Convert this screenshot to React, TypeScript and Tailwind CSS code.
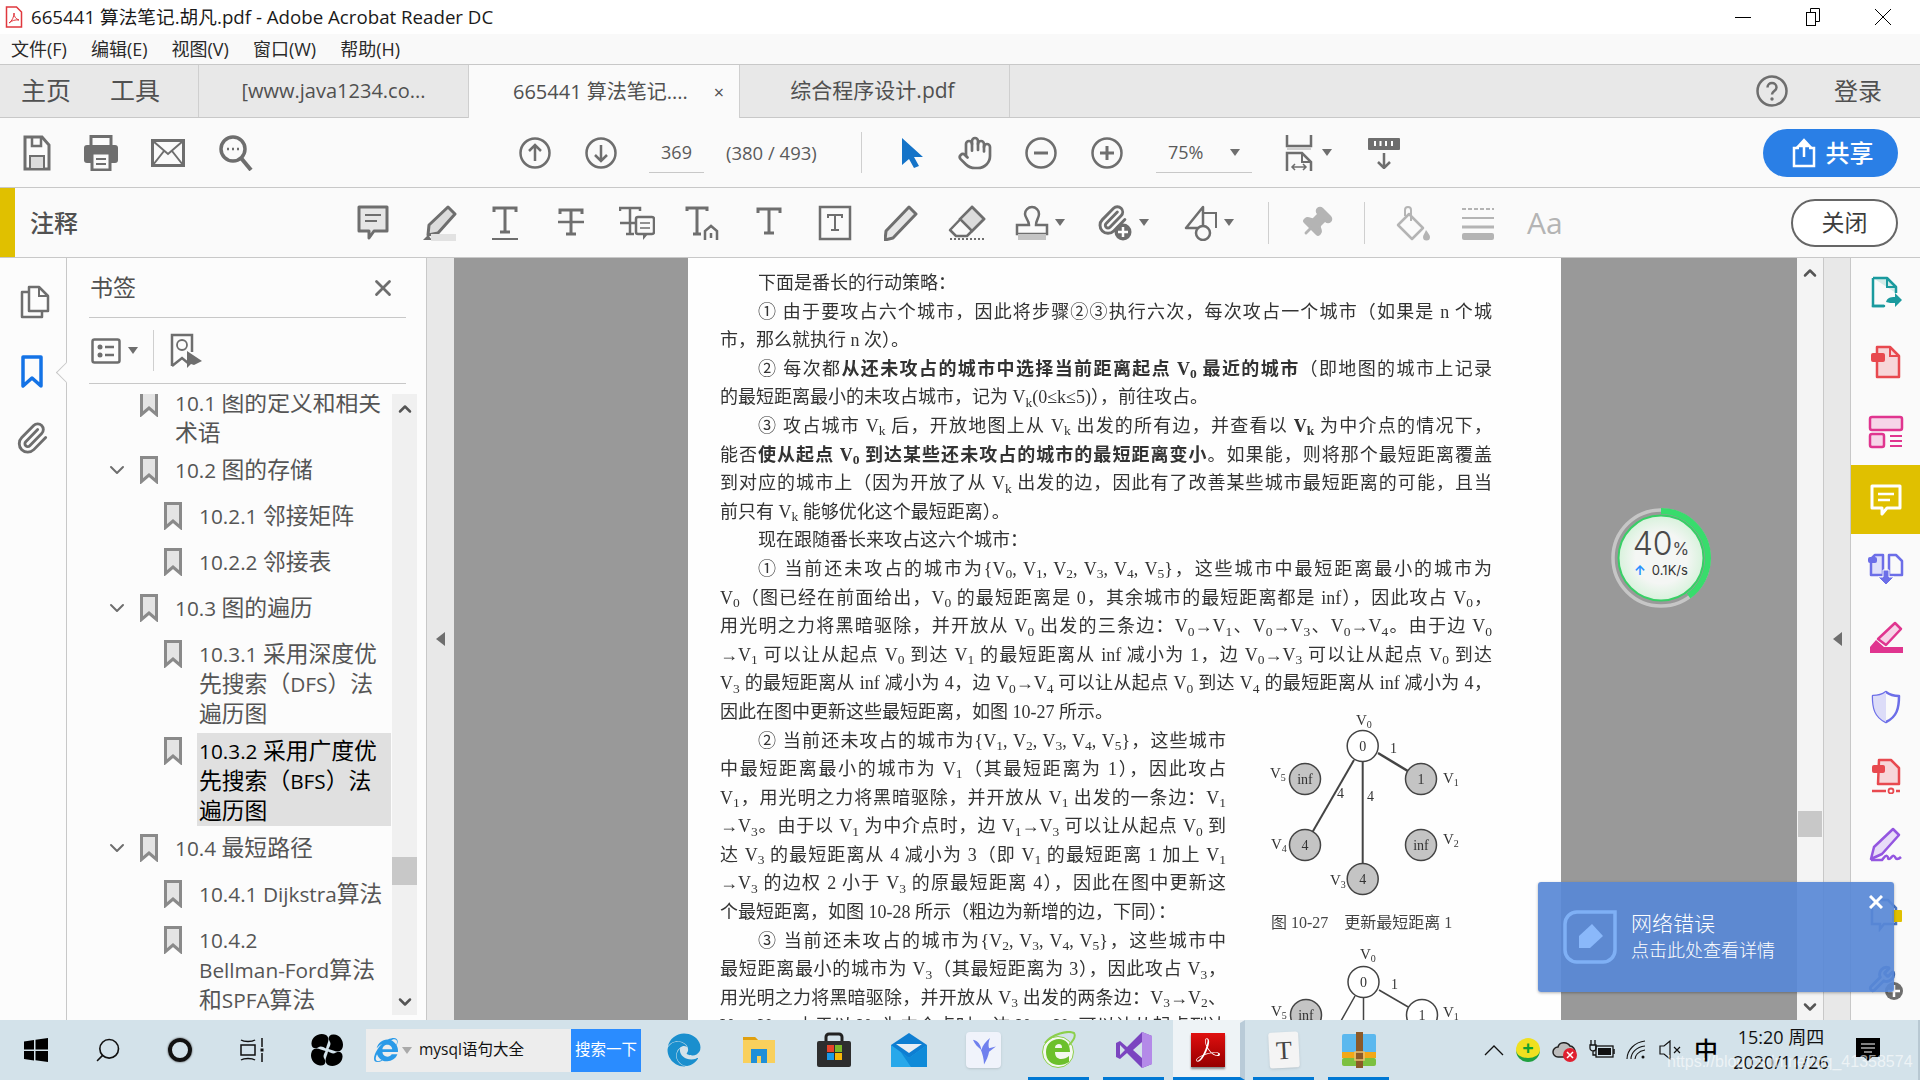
import React from 'react';
import { Hand, Paperclip, Pin, Search, X, ChevronDown, ChevronUp, Wrench } from 'lucide-react';
import { FaEdge, FaInternetExplorer } from 'react-icons/fa';
import { SiAdobeacrobatreader } from 'react-icons/si';

const G = '#6e6e6e';
const L = '#b4b4b4';

type Mark = { level: 1 | 2; lines: string[]; open?: boolean; active?: boolean };

const marks: Mark[] = [
  { level: 1, lines: ['10.1 图的定义和相关', '术语'] },
  { level: 1, lines: ['10.2 图的存储'], open: true },
  { level: 2, lines: ['10.2.1 邻接矩阵'] },
  { level: 2, lines: ['10.2.2 邻接表'] },
  { level: 1, lines: ['10.3 图的遍历'], open: true },
  { level: 2, lines: ['10.3.1 采用深度优', '先搜索（DFS）法', '遍历图'] },
  { level: 2, lines: ['10.3.2 采用广度优', '先搜索（BFS）法', '遍历图'], active: true },
  { level: 1, lines: ['10.4 最短路径'], open: true },
  { level: 2, lines: ['10.4.1 Dijkstra算法'] },
  { level: 2, lines: ['10.4.2', 'Bellman-Ford算法', '和SPFA算法'] },
];

// lines of the scanned page; * toggles bold, V0 / Vk get a subscript
const fullLines = [
  { t: '下面是番长的行动策略：', indent: true, last: true },
  { t: '① 由于要攻占六个城市，因此将步骤②③执行六次，每次攻占一个城市（如果是 n 个城', indent: true },
  { t: '市，那么就执行 n 次）。', last: true },
  { t: '② 每次都*从还未攻占的城市中选择当前距离起点 V0 最近的城市*（即地图的城市上记录', indent: true },
  { t: '的最短距离最小的未攻占城市，记为 Vk(0≤k≤5)），前往攻占。', last: true },
  { t: '③ 攻占城市 Vk 后，开放地图上从 Vk 出发的所有边，并查看以 *Vk* 为中介点的情况下，', indent: true },
  { t: '能否*使从起点 V0 到达某些还未攻占的城市的最短距离变小*。如果能，则将那个最短距离覆盖' },
  { t: '到对应的城市上（因为开放了从 Vk 出发的边，因此有了改善某些城市最短距离的可能，且当' },
  { t: '前只有 Vk 能够优化这个最短距离）。', last: true },
  { t: '现在跟随番长来攻占这六个城市：', indent: true, last: true },
  { t: '① 当前还未攻占的城市为{V0, V1, V2, V3, V4, V5}，这些城市中最短距离最小的城市为', indent: true },
  { t: 'V0（图已经在前面给出，V0 的最短距离是 0，其余城市的最短距离都是 inf），因此攻占 V0，' },
  { t: '用光明之力将黑暗驱除，并开放从 V0 出发的三条边：V0→V1、V0→V3、V0→V4。由于边 V0' },
  { t: '→V1 可以让从起点 V0 到达 V1 的最短距离从 inf 减小为 1，边 V0→V3 可以让从起点 V0 到达' },
  { t: 'V3 的最短距离从 inf 减小为 4，边 V0→V4 可以让从起点 V0 到达 V4 的最短距离从 inf 减小为 4，' },
];

const narrowLines = [
  { t: '因此在图中更新这些最短距离，如图 10-27 所示。', last: true },
  { t: '② 当前还未攻占的城市为{V1, V2, V3, V4, V5}，这些城市', indent: true },
  { t: '中最短距离最小的城市为 V1（其最短距离为 1），因此攻占' },
  { t: 'V1，用光明之力将黑暗驱除，并开放从 V1 出发的一条边：V1' },
  { t: '→V3。由于以 V1 为中介点时，边 V1→V3 可以让从起点 V0 到' },
  { t: '达 V3 的最短距离从 4 减小为 3（即 V1 的最短距离 1 加上 V1' },
  { t: '→V3 的边权 2 小于 V3 的原最短距离 4），因此在图中更新这' },
  { t: '个最短距离，如图 10-28 所示（粗边为新增的边，下同）：', last: true },
  { t: '③ 当前还未攻占的城市为{V2, V3, V4, V5}，这些城市中', indent: true },
  { t: '最短距离最小的城市为 V3（其最短距离为 3），因此攻占 V3，' },
  { t: '用光明之力将黑暗驱除，并开放从 V3 出发的两条边：V3→V2、' },
  { t: 'V3→V4。由于以 V3 为中介点时，边 V3→V4 可以让从起点到达' },
];

const rich = (s: string) =>
  s.split('*').map((chunk, i) => {
    const parts = chunk.split(/(V[0-9k])/).map((p, j) =>
      /^V[0-9k]$/.test(p) ? (
        <span key={j}>
          V<sub>{p[1]}</sub>
        </span>
      ) : (
        <span key={j}>{p}</span>
      ),
    );
    return i % 2 ? <b key={i}>{parts}</b> : <span key={i}>{parts}</span>;
  });

// latin runs of a bookmark title are set a bit smaller than the CJK around them
const markText = (s: string) =>
  s.split(/([\x20-\x7e]+)/).map((p, i) =>
    i % 2 ? (
      <span key={i} className="text-[20.8px]">
        {p}
      </span>
    ) : (
      <span key={i}>{p}</span>
    ),
  );

const PageLine = ({ t, indent, last }: { t: string; indent?: boolean; last?: boolean }) => (
  <div
    className={`h-[28.6px] leading-[28.6px] whitespace-nowrap ${indent ? 'pl-[38px]' : ''} ${
      last ? '' : '[text-align:justify] [text-align-last:justify]'
    }`}
  >
    {rich(t)}
  </div>
);

const Caret = ({ color = G }: { color?: string }) => (
  <svg width="10" height="7" viewBox="0 0 10 7" className="shrink-0">
    <path d="M0 0h10L5 7z" fill={color} />
  </svg>
);

const BookmarkIcon = () => (
  <svg width="18" height="28" viewBox="0 0 18 28" className="shrink-0 mt-[1px]">
    <path d="M1.5 1.5h15v24L9 19l-7.5 6.5z" fill="#e4e4e4" stroke="#8a8a8a" strokeWidth="3" />
  </svg>
);

const ArrowCircle = ({ down }: { down?: boolean }) => (
  <svg width="32" height="32" viewBox="0 0 32 32" className="shrink-0">
    <circle cx="16" cy="16" r="14.5" fill="none" stroke={G} strokeWidth="2.5" />
    <path d={down ? 'M16 8v16M10 18l6 6 6-6' : 'M16 24V8M10 14l6-6 6 6'} fill="none" stroke={G} strokeWidth="2.5" />
  </svg>
);

const ZoomCircle = ({ plus }: { plus?: boolean }) => (
  <svg width="32" height="32" viewBox="0 0 32 32" className="shrink-0">
    <circle cx="16" cy="16" r="14.5" fill="none" stroke={G} strokeWidth="2.5" />
    <path d={plus ? 'M9 16h14M16 9v14' : 'M9 16h14'} fill="none" stroke={G} strokeWidth="3" />
  </svg>
);

const TGlyph = ({ y = 0 }: { y?: number }) => (
  <path d={`M3 ${y + 7}V${y + 3}h22v4M14 ${y + 3}v24M9 ${y + 27}h10`} fill="none" stroke={G} strokeWidth="3" />
);

const ToolIcon = ({ children, w = 36 }: { children: React.ReactNode; w?: number }) => (
  <svg width={w} height="36" viewBox={`0 0 ${w} 36`} className="shrink-0">
    {children}
  </svg>
);

const Slot = ({ children }: { children: React.ReactNode }) => (
  <div className="w-[66px] shrink-0 flex justify-center">{children}</div>
);

const Sep = ({ className }: { className: string }) => <div className={`w-px bg-[#cfcfcf] shrink-0 ${className}`} />;

const RailItem = ({ children, active }: { children: React.ReactNode; active?: boolean }) => (
  <div className={`h-[69px] flex items-center justify-center ${active ? 'bg-[#e0c000]' : ''}`}>
    <svg width="36" height="36" viewBox="0 0 36 36">
      {children}
    </svg>
  </div>
);

const AppSlot = ({ children, line }: { children: React.ReactNode; line?: boolean }) => (
  <div className="w-[75px] h-full shrink-0 flex justify-center">
    <div
      className={`w-[61px] h-full flex items-center justify-center border-y-[3px] border-t-transparent ${
        line ? 'border-b-[#0078d4]' : 'border-b-transparent'
      }`}
    >
      {children}
    </div>
  </div>
);

const GraphNode = ({ x, y, label, dark }: { x: number; y: number; label: string; dark?: boolean }) => (
  <g>
    <circle cx={x} cy={y} r="15.5" fill={dark ? '#c4c4c4' : '#fff'} stroke="#444" strokeWidth="1.5" />
    <text x={x} y={y + 5} textAnchor="middle" fontSize="14" fill="#333">
      {label}
    </text>
  </g>
);

const VLabel = ({ x, y, n }: { x: number; y: number; n: number }) => (
  <text x={x} y={y} fontSize="15" fill="#333">
    V
    <tspan dy="3" fontSize="10">
      {n}
    </tspan>
  </text>
);

export default function App() {
  return (
    <div className="relative w-[1920px] h-[1080px] overflow-hidden flex flex-col bg-white text-[#505050] font-['Open_Sans','Noto_Sans_CJK_SC',sans-serif]">
      {/* title bar */}
      <div className="h-[34px] shrink-0 bg-white flex items-center text-[#1a1a1a]">
        <svg width="18" height="22" viewBox="0 0 18 22" className="ml-[5px] shrink-0">
          <path d="M1.5 1h10l5 5v15h-15z" fill="#fff" stroke="#e0383e" strokeWidth="1.5" />
          <path d="M4 17c3-2 5-6 5-10 0 4 2 6 5 7-4-.5-7 .5-10 3z" fill="none" stroke="#e0383e" strokeWidth="1" />
        </svg>
        <span className="ml-[8px] text-[18.7px] leading-none">665441 算法笔记.胡凡.pdf - Adobe Acrobat Reader DC</span>
        <div className="ml-auto mr-[2px] flex h-full">
          <div className="w-[70px] flex items-center justify-center">
            <div className="w-[16px] h-px bg-black" />
          </div>
          <div className="w-[70px] flex items-center justify-center">
            <svg width="16" height="18" viewBox="0 0 16 18" fill="#fff" stroke="#000">
              <path d="M5.5 4V.5h9v13H11" />
              <rect x="1.5" y="4.5" width="9" height="13" />
            </svg>
          </div>
          <div className="w-[70px] flex items-center justify-center">
            <svg width="16" height="16" viewBox="0 0 16 16" stroke="#000">
              <path d="M0 0l16 16M16 0L0 16" />
            </svg>
          </div>
        </div>
      </div>

      {/* menu */}
      <div className="h-[30px] shrink-0 bg-[#f9f9f9] flex items-center text-[18px] text-[#2a2a2a] pl-[11px] gap-[24px]">
        <span>文件(F)</span>
        <span>编辑(E)</span>
        <span>视图(V)</span>
        <span>窗口(W)</span>
        <span>帮助(H)</span>
      </div>

      {/* tabs */}
      <div className="h-[54px] shrink-0 bg-[#e8e8e8] border-y border-[#c8c8c8] flex text-[#505050]">
        <div className="w-[199px] shrink-0 flex items-center border-r border-[#cfcfcf] pl-[21px] gap-[39px] text-[25px]">
          <span>主页</span>
          <span>工具</span>
        </div>
        <div className="w-[269px] shrink-0 flex items-center justify-center text-[20px]">[www.java1234.co...</div>
        <div className="w-[272px] shrink-0 flex items-center bg-[#fafafa] border-l border-r border-[#cfcfcf] -mb-px pl-[44px] text-[20px]">
          <span>665441 算法笔记....</span>
          <span className="ml-[26px] text-[18px] leading-none">×</span>
        </div>
        <div className="w-[270px] shrink-0 flex items-center justify-center text-[21px] border-r border-[#cfcfcf] pr-[4px]">综合程序设计.pdf</div>
        <div className="ml-auto flex items-center">
          <svg width="32" height="32" viewBox="0 0 32 32" className="shrink-0">
            <circle cx="16" cy="16" r="14.5" fill="none" stroke={G} strokeWidth="2.5" />
            <path d="M11.5 12.5c0-6 9-6 9 0 0 3.5-4.5 3.5-4.5 7" fill="none" stroke={G} strokeWidth="2.5" />
            <circle cx="16" cy="24" r="1.7" fill={G} />
          </svg>
          <span className="ml-[46px] mr-[38px] text-[24px]">登录</span>
        </div>
      </div>

      {/* main toolbar */}
      <div className="h-[70px] shrink-0 bg-[#fafafa] border-b border-[#c8c8c8] flex items-center text-[#5a5a5a]">
        <svg width="28" height="36" viewBox="0 0 28 36" className="ml-[23px] shrink-0">
          <path d="M2 2h17l7 8v24H2z" fill="none" stroke={G} strokeWidth="3" />
          <path d="M9 2v9h9V2" fill="none" stroke={G} strokeWidth="2.5" />
          <rect x="7" y="21" width="14" height="13" fill="#dcdcdc" stroke={G} strokeWidth="2" />
        </svg>
        <svg width="36" height="36" viewBox="0 0 36 36" className="ml-[32px] shrink-0">
          <rect x="8" y="1.5" width="20" height="10" fill="none" stroke={G} strokeWidth="3" />
          <rect x="1" y="10" width="34" height="18" rx="3" fill={G} />
          <rect x="9" y="18" width="18" height="17" fill="#fafafa" stroke={G} strokeWidth="3" />
          <path d="M13 24h10M13 29h10" stroke={G} strokeWidth="2" />
        </svg>
        <svg width="34" height="28" viewBox="0 0 34 28" className="ml-[32px] shrink-0">
          <rect x="1.5" y="1.5" width="31" height="25" fill="none" stroke={G} strokeWidth="3" />
          <path d="M2 2l15 13L32 2M2 26l11-14M32 26L21 12" fill="none" stroke={G} strokeWidth="2" />
        </svg>
        <svg width="34" height="36" viewBox="0 0 34 36" className="ml-[34px] shrink-0">
          <circle cx="14" cy="14" r="12" fill="none" stroke={G} strokeWidth="3.5" />
          <path d="M22 23l10 12" stroke={G} strokeWidth="4" />
          <path d="M8 14h2M13 14h2M18 14h2" stroke={G} strokeWidth="2.5" />
        </svg>
        <div className="ml-[266px] shrink-0">
          <ArrowCircle />
        </div>
        <div className="ml-[34px] shrink-0">
          <ArrowCircle down />
        </div>
        <div className="ml-[32px] w-[55px] h-[41px] shrink-0 flex items-center justify-center border-b border-[#c8c8c8] text-[18px]">
          369
        </div>
        <span className="ml-[22px] w-[94px] shrink-0 text-[18.5px] whitespace-nowrap">(380 / 493)</span>
        <Sep className="ml-[41px] h-[41px]" />
        <svg width="24" height="32" viewBox="0 0 24 32" className="ml-[38px] shrink-0">
          <path d="M2 1v27l7-6 5 9 5-2-5-9h9z" fill="#1473c8" />
        </svg>
        <Hand size={36} stroke={G} strokeWidth={1.8} className="ml-[33px] shrink-0" />
        <div className="ml-[32px] shrink-0">
          <ZoomCircle />
        </div>
        <div className="ml-[34px] shrink-0">
          <ZoomCircle plus />
        </div>
        <div className="ml-[33px] w-[96px] h-[41px] shrink-0 flex items-center border-b border-[#c8c8c8] pl-[12px] pr-[12px] text-[18px]">
          <span>75%</span>
          <div className="ml-auto">
            <Caret />
          </div>
        </div>
        <svg width="30" height="36" viewBox="0 0 30 36" className="ml-[32px] shrink-0">
          <path d="M3 0v11h24V0" fill="none" stroke={G} strokeWidth="2.5" />
          <rect x="3" y="12" width="24" height="3" fill="#cfcfcf" />
          <path d="M3 36V18h15l9 9v9" fill="none" stroke={G} strokeWidth="2.5" />
          <path d="M18 18v9h9" fill="none" stroke={G} strokeWidth="2" />
          <path d="M8 32h14M11 29l-3 3 3 3M19 29l3 3-3 3" fill="none" stroke={G} strokeWidth="1.5" />
        </svg>
        <div className="ml-[8px] shrink-0">
          <Caret />
        </div>
        <svg width="32" height="32" viewBox="0 0 32 32" className="ml-[36px] shrink-0">
          <rect x="0" y="1" width="32" height="12" rx="1" fill={G} />
          <path d="M7 4v5M12.5 4v5M18 4v5M24 4v5" stroke="#fff" strokeWidth="2" />
          <path d="M16 16v15M10 25l6 6 6-6" fill="none" stroke={G} strokeWidth="2.5" />
        </svg>
        <div className="ml-auto mr-[22px] w-[135px] h-[48px] shrink-0 rounded-full bg-[#2a7fe6] flex items-center justify-center gap-[10px] pl-[4px] text-white text-[24px] font-medium">
          <svg width="24" height="30" viewBox="0 0 24 30">
            <path d="M7 10H2v18h20V10h-5" fill="none" stroke="#fff" strokeWidth="2.5" />
            <path d="M12 19V2M6.5 8L12 2l5.5 6z" fill="#fff" stroke="#fff" strokeWidth="2.5" />
          </svg>
          <span>共享</span>
        </div>
      </div>

      {/* comment toolbar */}
      <div className="h-[70px] shrink-0 bg-[#fafafa] border-b border-[#c8c8c8] flex items-center">
        <div className="w-[15px] h-full shrink-0 bg-[#e0c000]" />
        <span className="ml-[15px] w-[48px] shrink-0 text-[24px] font-medium whitespace-nowrap">注释</span>
        <div className="ml-[262px] flex shrink-0">
          <Slot>
            <ToolIcon w={32}>
              <path d="M2 2h28v24H17l-5 7v-7H2z" fill="#e6e6e6" stroke={G} strokeWidth="3" strokeLinejoin="round" />
              <path d="M8 10h16M8 16h12" stroke={G} strokeWidth="2" />
            </ToolIcon>
          </Slot>
          <Slot>
            <ToolIcon>
              <path d="M27 2l7 7-17 19-10 2 1-10z" fill="#dcdcdc" stroke={G} strokeWidth="3" strokeLinejoin="round" />
              <path d="M2 35l5-5 4 5z" fill={G} />
              <rect x="10" y="29" width="25" height="7" fill="#e2e2e2" />
            </ToolIcon>
          </Slot>
          <Slot>
            <ToolIcon w={28}>
              <TGlyph />
              <path d="M1 34h26" stroke={G} strokeWidth="2" />
            </ToolIcon>
          </Slot>
          <Slot>
            <ToolIcon w={28}>
              <TGlyph y={2} />
              <path d="M1 17h26" stroke={G} strokeWidth="2.5" />
            </ToolIcon>
          </Slot>
          <Slot>
            <ToolIcon>
              <path d="M1 6V3h20v3M11 3v26M7 29h8M1 18h16" fill="none" stroke={G} strokeWidth="2.5" />
              <rect x="17" y="12" width="18" height="17" rx="2" fill="#fafafa" stroke={G} strokeWidth="2.5" />
              <path d="M21 18h10M21 23h10" stroke={G} strokeWidth="1.5" />
              <path d="M24 29v6l5-6z" fill={G} />
            </ToolIcon>
          </Slot>
          <Slot>
            <ToolIcon>
              <path d="M2 6V3h20v3M12 3v26M8 29h8" fill="none" stroke={G} strokeWidth="3" />
              <path d="M20 35v-9l6-5 6 5v9M26 33v-5" fill="none" stroke={G} strokeWidth="2.5" />
            </ToolIcon>
          </Slot>
          <Slot>
            <ToolIcon w={28}>
              <TGlyph y={1} />
            </ToolIcon>
          </Slot>
          <Slot>
            <ToolIcon w={34}>
              <rect x="2" y="2" width="30" height="32" fill="none" stroke={G} strokeWidth="2.5" />
              <path d="M10 13v-3h14v3M17 10v15M13 25h8" fill="none" stroke={G} strokeWidth="2" />
            </ToolIcon>
          </Slot>
          <Slot>
            <ToolIcon w={34}>
              <path d="M25 2l7 7L9 33l-8 2 1-9z" fill="#e6e6e6" stroke={G} strokeWidth="3" strokeLinejoin="round" />
            </ToolIcon>
          </Slot>
          <Slot>
            <ToolIcon w={38}>
              <path d="M24 2l12 12-17 17H8l-6-6z" fill="#fafafa" stroke={G} strokeWidth="2.5" strokeLinejoin="round" />
              <path d="M24 2l12 12-12 12-12-12z" fill="#dcdcdc" stroke={G} strokeWidth="2.5" />
              <path d="M2 34h34" stroke={G} strokeWidth="2" strokeDasharray="2 2" />
            </ToolIcon>
          </Slot>
        </div>
        <div className="ml-[15px] shrink-0">
          <ToolIcon w={34}>
            <path d="M10 9a7 7 0 1 1 14 0c0 4-3 6-3 11h11v9H2v-9h12c0-5-4-7-4-11z" fill="none" stroke={G} strokeWidth="2.5" />
            <rect x="3" y="29" width="28" height="6" fill="#c4c4c4" />
          </ToolIcon>
        </div>
        <div className="ml-[6px] shrink-0">
          <Caret />
        </div>
        <div className="ml-[33px] shrink-0">
          <ToolIcon w={34}>
            <Paperclip x={-2} y={-1} width={32} height={32} stroke={G} strokeWidth={2.2} />
            <circle cx="25" cy="27" r="8.5" fill={G} />
            <path d="M25 22v10M20 27h10" stroke="#fff" strokeWidth="2.5" />
          </ToolIcon>
        </div>
        <div className="ml-[7px] shrink-0">
          <Caret />
        </div>
        <div className="ml-[35px] shrink-0">
          <ToolIcon w={34}>
            <path d="M2 23L19 2v21z" fill="none" stroke={G} strokeWidth="2.5" strokeLinejoin="round" />
            <path d="M19 8h13v15" fill="none" stroke={G} strokeWidth="2" />
            <circle cx="19" cy="28" r="7" fill="#fafafa" stroke={G} strokeWidth="2.5" />
          </ToolIcon>
        </div>
        <div className="ml-[6px] shrink-0">
          <Caret />
        </div>
        <Sep className="ml-[34px] h-[42px]" />
        <Pin size={34} stroke={L} fill={L} className="ml-[30px] shrink-0 rotate-45" />
        <Sep className="ml-[31px] h-[42px]" />
        <div className="ml-[30px] shrink-0">
          <ToolIcon>
            <path d="M14 9l14 14-11 11L3 20z" fill="#fafafa" stroke={L} strokeWidth="2.5" strokeLinejoin="round" />
            <path d="M10 11V5a3 3 0 0 1 6 0v11" fill="none" stroke={L} strokeWidth="2" />
            <path d="M31 25c2 3 4 5 4 7a3.5 3.5 0 0 1-7 0c0-2 2-4 3-7z" fill={L} />
          </ToolIcon>
        </div>
        <div className="ml-[30px] shrink-0">
          <ToolIcon w={34}>
            <path d="M1 4h32" stroke={L} strokeWidth="2" strokeDasharray="4 2" />
            <path d="M1 13h32" stroke={L} strokeWidth="2" />
            <path d="M1 22h32" stroke={L} strokeWidth="3" />
            <rect x="1" y="28" width="32" height="7" rx="2" fill={L} />
          </ToolIcon>
        </div>
        <span className="ml-[32px] text-[30px] leading-none text-[#b4b4b4] font-['Open_Sans',sans-serif]">Aa</span>
        <div className="ml-auto mr-[22px] w-[107px] h-[48px] shrink-0 rounded-full border-2 border-[#666] bg-white flex items-center justify-center text-[23px] text-[#3c3c3c]">
          关闭
        </div>
      </div>

      {/* body */}
      <div className="flex-1 min-h-0 flex">
        {/* left rail */}
        <div className="relative w-[67px] shrink-0 bg-[#fcfcfc] border-r border-[#c8c8c8] flex flex-col pl-[17px]">
          <svg width="30" height="34" viewBox="0 0 30 34" className="mt-[27px] ml-[3px]">
            <path d="M8 7H2v25h20v-6" fill="none" stroke={G} strokeWidth="2.5" strokeLinejoin="round" />
            <path d="M9 2h10l9 9v15H9z" fill="#fcfcfc" stroke={G} strokeWidth="2.5" strokeLinejoin="round" />
            <path d="M19 2v9h9" fill="none" stroke={G} strokeWidth="2" />
          </svg>
          <svg width="22" height="34" viewBox="0 0 22 34" className="mt-[36px] ml-[4px]">
            <path d="M2 2h18v29l-9-8-9 8z" fill="none" stroke="#1473e6" strokeWidth="3.5" strokeLinejoin="round" />
          </svg>
          <Paperclip size={34} stroke={G} strokeWidth={2} className="mt-[32px] -ml-[2px]" />
          <div className="absolute -right-[8px] top-[107px] w-[15px] h-[15px] rotate-45 bg-[#fcfcfc] border-l border-b border-[#c8c8c8]" />
        </div>

        {/* bookmarks */}
        <div className="w-[360px] shrink-0 bg-[#fcfcfc] border-r border-[#c8c8c8] flex flex-col">
          <div className="mx-[22px] mr-[20px] h-[60px] shrink-0 border-b border-[#c8c8c8] flex items-center justify-between">
            <span className="ml-[1px] text-[23px]">书签</span>
            <X size={26} stroke={G} strokeWidth={2.6} className="mr-[10px]" />
          </div>
          <div className="mx-[22px] mr-[20px] h-[66px] shrink-0 border-b border-[#c8c8c8] flex items-center">
            <svg width="30" height="26" viewBox="0 0 30 26" className="ml-[2px]">
              <rect x="1.5" y="1.5" width="27" height="23" rx="2" fill="none" stroke={G} strokeWidth="2.5" />
              <circle cx="9" cy="9" r="2.5" fill={G} />
              <circle cx="9" cy="17" r="2.5" fill={G} />
              <path d="M14 9h9M14 17h9" stroke={G} strokeWidth="2.5" />
            </svg>
            <div className="ml-[7px]">
              <Caret />
            </div>
            <Sep className="ml-[15px] h-[41px]" />
            <svg width="32" height="36" viewBox="0 0 32 36" className="ml-[16px]">
              <path d="M2 33V2h20v17M2 33l10-8 6 5" fill="none" stroke={G} strokeWidth="2.5" />
              <circle cx="12" cy="12" r="5" fill="none" stroke={G} strokeWidth="1.8" />
              <path d="M17 18v17l4-4 3 1 8-4z" fill={G} />
            </svg>
          </div>
          <div className="flex-1 min-h-0 mt-[10px] flex">
            <div className="w-[325px] shrink-0 overflow-hidden text-[22.8px] leading-[30px] text-[#555]">
              <div className="-mt-[6px]">
                {marks.map((m) => (
                  <div
                    key={m.lines[0]}
                    className={`flex items-start ${m.level === 1 ? 'pl-[38px]' : 'pl-[97px]'} ${
                      m.lines.length > 1 ? 'pb-[7px]' : 'pb-[16px]'
                    }`}
                  >
                    {m.level === 1 && (
                      <div className="w-[35px] shrink-0 h-[30px] flex items-center">
                        {m.open && <ChevronDown size={24} stroke={G} strokeWidth={2} />}
                      </div>
                    )}
                    <BookmarkIcon />
                    <div
                      className={`ml-[15px] pl-[2px] w-[194px] whitespace-nowrap ${
                        m.active ? 'bg-[#e0e0e0] text-black -mt-[3px] pt-[3px]' : ''
                      }`}
                    >
                      {m.lines.map((l) => (
                        <div key={l} className="h-[30px]">
                          {markText(l)}
                        </div>
                      ))}
                    </div>
                  </div>
                ))}
              </div>
            </div>
            <div className="w-[25px] mb-[5px] shrink-0 bg-[#f0f0f0] flex flex-col items-center">
              <div className="h-[30px] shrink-0 flex items-center">
                <ChevronUp size={20} stroke="#555" strokeWidth={3} />
              </div>
              <div className="w-full h-[28px] mt-[433px] shrink-0 bg-[#c8c8c8]" />
              <div className="mt-auto h-[26px] shrink-0 flex items-center">
                <ChevronDown size={20} stroke="#555" strokeWidth={3} />
              </div>
            </div>
          </div>
        </div>

        {/* collapse strip */}
        <div className="w-[27px] shrink-0 bg-[#e8e8e8] flex items-center justify-center">
          <svg width="9" height="14" viewBox="0 0 9 14">
            <path d="M9 0v14L0 7z" fill={G} />
          </svg>
        </div>

        {/* document */}
        <div className="w-[1343px] shrink-0 bg-[#999999] pl-[234px] overflow-hidden">
          <div className="w-[873px] h-[800px] bg-[#fefefe] pt-[11px] pl-[32px] pr-[69px] text-[18px] text-[#333333] blur-[0.4px] font-['Liberation_Serif','Noto_Sans_CJK_SC',serif]">
            {fullLines.map((l) => (
              <PageLine key={l.t} {...l} />
            ))}
            <div className="flex">
              <div className="w-[506px] shrink-0">
                {narrowLines.map((l) => (
                  <PageLine key={l.t} {...l} />
                ))}
              </div>
              <svg width="260" height="345" viewBox="0 0 260 345" className="ml-[14px] shrink-0">
                <g stroke="#444">
                  <path d="M138 55l43 26" strokeWidth="2.5" />
                  <path d="M114 62L65 147" strokeWidth="2" />
                  <path d="M122.7 64v101" strokeWidth="2" />
                  <path d="M139 292l43 25" strokeWidth="1.5" />
                  <path d="M115 298l-18 32M123.5 300v30" strokeWidth="1.5" />
                </g>
                <GraphNode x={122.7} y={48} label="0" />
                <GraphNode x={181} y={81} label="1" dark />
                <GraphNode x={65} y={81} label="inf" dark />
                <GraphNode x={65} y={147} label="4" dark />
                <GraphNode x={181} y={147} label="inf" dark />
                <GraphNode x={122.7} y={181} label="4" dark />
                <VLabel x={116} y={27} n={0} />
                <VLabel x={203} y={85} n={1} />
                <VLabel x={30} y={80} n={5} />
                <VLabel x={31} y={151} n={4} />
                <VLabel x={203} y={146} n={2} />
                <VLabel x={90} y={187} n={3} />
                <text x="150" y="55" fontSize="14" fill="#333">1</text>
                <text x="97" y="100" fontSize="14" fill="#333">4</text>
                <text x="127" y="103" fontSize="14" fill="#333">4</text>
                <text x="31" y="230" fontSize="16" fill="#444">图 10-27　更新最短距离 1</text>
                <GraphNode x={123.5} y={284} label="0" />
                <GraphNode x={182} y={317} label="1" />
                <GraphNode x={66} y={317} label="inf" dark />
                <VLabel x={120} y={261} n={0} />
                <VLabel x={203} y={319} n={1} />
                <VLabel x={31} y={318} n={5} />
                <text x="151" y="291" fontSize="14" fill="#333">1</text>
              </svg>
            </div>
          </div>
        </div>

        {/* doc scrollbar */}
        <div className="w-[27px] shrink-0 bg-[#f4f4f4] border-r border-[#c8c8c8] flex flex-col items-center">
          <div className="h-[30px] shrink-0 flex items-center">
            <ChevronUp size={20} stroke="#555" strokeWidth={3} />
          </div>
          <div className="w-[24px] h-[26px] mt-[523px] shrink-0 bg-[#c8c8c8]" />
          <div className="mt-auto h-[26px] shrink-0 flex items-center">
            <ChevronDown size={20} stroke="#555" strokeWidth={3} />
          </div>
        </div>
        <div className="w-[27px] shrink-0 bg-[#e8e8e8] border-r border-[#c8c8c8] flex items-center justify-center">
          <svg width="9" height="14" viewBox="0 0 9 14">
            <path d="M9 0v14L0 7z" fill={G} />
          </svg>
        </div>

        {/* right rail */}
        <div className="flex-1 bg-[#fafafa] flex flex-col">
          <RailItem>
            <path d="M5 3h14l9 9v6M16 31H5z" fill="#d2ebe8" stroke="#1a9a9e" strokeWidth="2.5" strokeLinejoin="round" />
            <path d="M5 3v28h11" fill="none" stroke="#1a9a9e" strokeWidth="2.5" />
            <path d="M19 3v9h9" fill="none" stroke="#1a9a9e" strokeWidth="2" />
            <path d="M18 27c1-4 4-5 9-5v-4l7 7-7 7v-4c-4 0-6 0-9-1z" fill="#1a9a9e" />
          </RailItem>
          <RailItem>
            <path d="M10 3h12l9 9v21H9V3z" fill="#f7d6d9" stroke="#e8494f" strokeWidth="2.5" strokeLinejoin="round" />
            <path d="M22 3v9h9" fill="none" stroke="#e8494f" strokeWidth="2" />
            <rect x="3" y="9" width="14" height="9" rx="2" fill="#e8494f" />
          </RailItem>
          <RailItem>
            <rect x="2" y="4" width="32" height="13" rx="2" fill="#f6d5e8" stroke="#e0358f" strokeWidth="2.5" />
            <rect x="2" y="21" width="14" height="13" rx="2" fill="#f6d5e8" stroke="#e0358f" strokeWidth="2.5" />
            <path d="M22 23h12M22 28h12M22 33h12" stroke="#e0358f" strokeWidth="1.8" />
          </RailItem>
          <RailItem active>
            <path d="M4 4h28v22H19l-5 6v-6H4z" fill="none" stroke="#fff" strokeWidth="3" strokeLinejoin="round" />
            <path d="M10 12h16M10 18h12" stroke="#fff" strokeWidth="2.5" />
          </RailItem>
          <RailItem>
            <path d="M7 4h8v20H3V8z" fill="#e0e0fa" stroke="#6c6ee8" strokeWidth="2.5" strokeLinejoin="round" />
            <path d="M21 4h7l6 6v14H21z" fill="#fafafa" stroke="#6c6ee8" strokeWidth="2.5" strokeLinejoin="round" />
            <rect x="0" y="6" width="9" height="6" rx="2" fill="#6c6ee8" />
            <path d="M15 19h6v7h5l-8 8-8-8h5z" fill="#6c6ee8" stroke="#fafafa" strokeWidth="1" />
          </RailItem>
          <RailItem>
            <path d="M27 3l6 6-15 16-8-6z" fill="#f6d5e8" stroke="#e0358f" strokeWidth="2.5" strokeLinejoin="round" />
            <path d="M8 20l8 7H35v6H2v-6z" fill="#e0358f" />
          </RailItem>
          <RailItem>
            <path d="M18 3c4 3 8 4 13 4 0 12-2 21-13 26C7 28 5 19 5 7c5 0 9-1 13-4z" fill="#fafafa" stroke="#6c6ee8" strokeWidth="2.5" strokeLinejoin="round" />
            <path d="M18 3C14 6 10 7 5 7c0 12 2 21 13 26z" fill="#dcdcf8" />
          </RailItem>
          <RailItem>
            <path d="M11 2h12l8 8v16H10z" fill="#f7d6d9" stroke="#e8494f" strokeWidth="2.5" strokeLinejoin="round" />
            <rect x="4" y="7" width="13" height="8" rx="2" fill="#e8494f" />
            <path d="M4 33h14M28 33h4" stroke="#e8494f" strokeWidth="2.5" />
            <circle cx="23" cy="33" r="2.5" fill="none" stroke="#e8494f" strokeWidth="1.8" />
          </RailItem>
          <RailItem>
            <path d="M25 2l6 6-17 19-11 5 3-12z" fill="#e8dcf8" stroke="#9456e0" strokeWidth="2.5" strokeLinejoin="round" />
            <path d="M3 33h11c2-2 3-5 5-4s0 3 2 3 3-4 5-3 1 3 3 3 3-1 4-2" fill="none" stroke="#9456e0" strokeWidth="2.5" />
          </RailItem>
          <RailItem>
            <path d="M4 4h16l8 8v16H16l-4 5v-5H4z" fill="none" stroke="#4a76c4" strokeWidth="2.5" />
            <rect x="24" y="14" width="10" height="12" rx="1" fill="#e0c000" />
          </RailItem>
          <RailItem>
            <Wrench x={0} y={0} width={28} height={28} stroke="#4a76c4" strokeWidth={2.5} />
            <circle cx="26" cy="26" r="9" fill={G} />
            <path d="M26 20v12M20 26h12" stroke="#fff" strokeWidth="2.5" />
          </RailItem>
        </div>
      </div>

      {/* taskbar */}
      <div className="h-[60px] shrink-0 bg-[#d3e2ea] flex items-center border-r-[2px] border-[#b8c8d2] pr-[6px] text-black">
        <div className="w-[72px] shrink-0 flex justify-center">
          <svg width="24" height="24" viewBox="0 0 24 24" fill="#000">
            <path d="M0 3.5l10-1.5v9.5H0zM11.5 1.8L24 0v11.5H11.5zM0 13h10v9.5L0 21zM11.5 13H24v11l-12.5-1.8z" />
          </svg>
        </div>
        <div className="w-[72px] shrink-0 flex justify-center">
          <Search size={28} stroke="#111" strokeWidth={1.4} className="-scale-x-100" />
        </div>
        <div className="w-[72px] shrink-0 flex justify-center">
          <div className="w-[24px] h-[24px] rounded-full border-[4px] border-[#111] shadow-[0_0_2px_#333]" />
        </div>
        <div className="w-[72px] shrink-0 flex justify-center">
          <svg width="24" height="24" viewBox="0 0 24 24" fill="none" stroke="#111" strokeWidth="1.5">
            <path d="M1 2c3 2 11 2 14 0M1 7h14v10H1zM1 22c3-2 11-2 14 0M22 0v9M22 15v9" />
            <rect x="20.5" y="10.5" width="3" height="3" fill="#111" stroke="none" />
          </svg>
        </div>
        <div className="w-[78px] shrink-0 flex justify-center">
          <svg width="34" height="34" viewBox="0 0 34 34" fill="#000">
            {[0, 90, 180, 270].map((a) => (
              <path
                key={a}
                transform={`rotate(${a} 17 17)`}
                d="M16 15.5C17 10 21 6 16 2 10-1 2 3 1.5 10 1 15 5 16.5 8 14.5c3-2 5-.5 8 1z"
              />
            ))}
          </svg>
        </div>
        <div className="w-[275px] h-[43px] shrink-0 flex bg-[#ededed]">
          <FaInternetExplorer size={24} color="#2a9ae8" className="ml-[8px] self-center shrink-0" />
          <div className="ml-[4px] self-center">
            <Caret color="#aaaaaa" />
          </div>
          <span className="ml-[7px] self-center text-[15.5px] text-[#111] whitespace-nowrap">mysql语句大全</span>
          <div className="ml-auto w-[70px] bg-[#2a8cff] flex items-center justify-center text-[15.5px] text-white whitespace-nowrap">搜索一下</div>
        </div>
        <div className="w-[5px] shrink-0" />
        <AppSlot>
          <FaEdge size={34} color="#1a8fce" />
        </AppSlot>
        <AppSlot>
          <svg width="32" height="32" viewBox="0 0 32 32">
            <path d="M0 3h12l3 3h17v23H0z" fill="#f9d05c" />
            <path d="M0 3h12l3 3H0z" fill="#e0a010" />
            <path d="M8 29V15h16v14h-6v-7h-4v7z" fill="#1f8fd8" />
          </svg>
        </AppSlot>
        <AppSlot>
          <svg width="36" height="36" viewBox="0 0 36 36">
            <path d="M10 9V5a3 3 0 0 1 3-3h10a3 3 0 0 1 3 3v4" fill="none" stroke="#222" strokeWidth="3" />
            <rect x="1" y="9" width="34" height="26" rx="2" fill="#2e2e2e" />
            <rect x="11" y="13" width="7" height="7" fill="#e8442a" />
            <rect x="19" y="13" width="7" height="7" fill="#7cb82a" />
            <rect x="11" y="21" width="7" height="7" fill="#1a9ae8" />
            <rect x="19" y="21" width="7" height="7" fill="#f8b808" />
          </svg>
        </AppSlot>
        <AppSlot>
          <svg width="36" height="36" viewBox="0 0 36 36">
            <path d="M0 13L18 1l18 12v22H0z" fill="#0e7ed2" />
            <path d="M5 12h26l-13 9z" fill="#e8eef4" />
            <path d="M0 13l18 13 18-13v22H0z" fill="#28a8ea" />
            <path d="M36 13v22H20L9 19l9 7z" fill="#0f8ad8" />
          </svg>
        </AppSlot>
        <AppSlot>
          <div className="w-[35px] h-[36px] rounded-[4px] bg-[#f0f3fb] flex items-center justify-center shadow-sm">
            <svg width="30" height="34" viewBox="0 0 32 40">
              <path d="M3 8c6 1 9 6 10 12 1-5 5-10 10-14-2 5-2 9-1 12l8-2-8 6c-1 5-3 10-6 15 0-7-2-13-4-18C9 17 5 13 3 8z" fill="#6f80ee" />
            </svg>
          </div>
        </AppSlot>
        <AppSlot line>
          <svg width="34" height="38" viewBox="0 0 34 38">
            <circle cx="16" cy="21" r="15.5" fill="#f4f8f0" stroke="#8ccf4c" strokeWidth="1" />
            <path d="M4 21c0-8 6-13 13-13s11 5 11 13H13c0 5 3 7 6 7 3 0 6-1 8-3v6c-3 2-6 3-10 3C9 34 4 29 4 21zm9-4h7c0-3-1-4-3-4s-4 1-4 4z" fill="#6cc02c" />
            <path d="M3 12C10 3 26-1 32 2c2 3-1 8-5 12" fill="none" stroke="#8ccf4c" strokeWidth="2" />
          </svg>
        </AppSlot>
        <AppSlot line>
          <svg width="36" height="36" viewBox="0 0 36 36">
            <path d="M26 0l10 4v28l-10 4-15-15-7 6-4-2V11l4-2 7 6z" fill="#7b45c0" />
            <path d="M26 0l10 4v28l-10 4z" fill="#b48ae8" />
            <path d="M4 13v10l5-5zM26 10v16l-9-8z" fill="#d3e2ea" />
          </svg>
        </AppSlot>
        <div className="w-[72px] h-full shrink-0 mx-[1.5px] pl-[4px] bg-[#eef3f6] border-y-[3px] border-t-transparent border-b-[#0078d4] border-r-[5px] border-r-[#b9cbd8] flex items-center justify-center">
          <div className="w-[34px] h-[34px] bg-gradient-to-b from-[#e01010] to-[#960000] flex items-center justify-center shadow-[0_2px_2px_#888]">
            <SiAdobeacrobatreader size={24} color="#fff" />
          </div>
        </div>
        <AppSlot line>
          <div className="w-[30px] h-[36px] rounded-[3px] bg-[#f4f4f4] -rotate-3 shadow-sm flex items-center justify-center font-['Liberation_Serif',serif] text-[26px] text-[#444]">
            T
          </div>
        </AppSlot>
        <AppSlot line>
          <svg width="36" height="36" viewBox="0 0 36 36">
            <rect x="1" y="2" width="34" height="20" rx="2" fill="#5bb8ee" />
            <rect x="1" y="20" width="34" height="6" fill="#f2a818" />
            <rect x="1" y="26" width="34" height="8" rx="2" fill="#7cc040" />
            <rect x="15" y="0" width="7" height="36" fill="#8c5a28" />
            <rect x="14" y="20" width="9" height="8" fill="none" stroke="#e8c070" strokeWidth="1.5" />
          </svg>
        </AppSlot>

        {/* tray */}
        <div className="ml-[88px] w-[20px] shrink-0 flex justify-center">
          <svg width="20" height="12" viewBox="0 0 20 12" fill="none" stroke="#111" strokeWidth="1.3">
            <path d="M1 11l9-9 9 9" />
          </svg>
        </div>
        <div className="ml-[12px] w-[24px] h-[24px] shrink-0 rounded-full bg-[#f0e020] border-b-[4px] border-[#20a040] flex items-center justify-center text-[#10a030] text-[20px] font-bold leading-none">
          +
        </div>
        <svg width="26" height="24" viewBox="0 0 26 24" className="ml-[12px] shrink-0">
          <path d="M6 19a5 5 0 0 1 0-10c1-5 9-6 12-1 3 0 5 3 5 6H14v5z" fill="#bcbcbc" stroke="#222" strokeWidth="1.5" />
          <circle cx="18" cy="17" r="7" fill="#e02030" />
          <path d="M15 14l6 6M21 14l-6 6" stroke="#fff" strokeWidth="1.5" />
        </svg>
        <svg width="26" height="20" viewBox="0 0 26 20" className="ml-[11px] shrink-0" fill="none" stroke="#111">
          <path d="M2 0v5M6 0v5" strokeWidth="1.3" />
          <path d="M1 5h6v3a3 3 0 0 1-6 0zM4 11v4h3" strokeWidth="1.3" />
          <rect x="7" y="6" width="17" height="11" strokeWidth="1.3" />
          <rect x="9" y="8" width="13" height="7" fill="#111" stroke="none" />
          <path d="M25 9v5" strokeWidth="1.5" />
        </svg>
        <svg width="20" height="20" viewBox="0 0 20 20" className="ml-[11px] shrink-0" fill="none" stroke="#111" strokeWidth="1.1">
          <path d="M1 19C1 10 9 2 19 1M5 19c0-6 5-12 14-13M9 19c0-3 3-8 10-9" />
          <circle cx="17" cy="17" r="1.5" fill="#111" stroke="none" />
        </svg>
        <svg width="22" height="20" viewBox="0 0 22 20" className="ml-[13px] shrink-0" fill="none" stroke="#111" strokeWidth="1.2">
          <path d="M1 6h4l6-5v18l-6-5H1zM15 7l6 6M21 7l-6 6" />
        </svg>
        <span className="ml-[13px] w-[24px] shrink-0 text-[24px] font-medium leading-none">中</span>
        <div className="ml-[8px] w-[110px] shrink-0 text-center text-[18px] leading-[25px] text-[#111] whitespace-nowrap">
          <div>15:20 周四</div>
          <div>2020/11/26</div>
        </div>
        <svg width="24" height="24" viewBox="0 0 24 24" className="ml-[20px] shrink-0">
          <path d="M0 0h24v19h-8l-4 4-4-4H0z" fill="#000" />
          <path d="M5 6h14M5 10h14M8 14h8" stroke="#fff" strokeWidth="1.2" />
        </svg>
      </div>

      {/* speed widget */}
      <div className="absolute left-[1611px] top-[508px] w-[100px] h-[100px]">
        <svg width="100" height="100" viewBox="0 0 100 100" className="absolute inset-0">
          <defs>
            <radialGradient id="speedFill">
              <stop offset="0.6" stopColor="#f4f6f4" />
              <stop offset="1" stopColor="#d8f2dc" />
            </radialGradient>
          </defs>
          <circle cx="50" cy="50" r="48" fill="none" stroke="#c6c6c6" strokeWidth="3.5" />
          <circle cx="50" cy="50" r="42.5" fill="url(#speedFill)" stroke="#38cf66" strokeWidth="2" />
          <circle cx="50" cy="50" r="47" fill="none" stroke="#38dc6c" strokeWidth="6" pathLength={100} strokeDasharray="40 60" transform="rotate(-90 50 50)" />
        </svg>
        <div className="relative h-full flex flex-col items-center pt-[20px] font-['Inter',sans-serif] text-[#4a4a4a]">
          <div className="flex items-baseline leading-none">
            <span className="text-[32px] font-light">40</span>
            <span className="text-[17px]">%</span>
          </div>
          <div className="mt-[4px] flex items-center text-[13px] leading-none text-[#333]">
            <span className="text-[#2a90ff] mr-[6px] font-bold">↑</span>
            0.1K/s
          </div>
        </div>
      </div>

      {/* error toast */}
      <div className="absolute left-[1538px] top-[882px] w-[356px] h-[110px] rounded-[3px] bg-[#5888d6]/92 shadow-[0_1px_3px_rgba(0,0,0,0.3)] flex items-center text-white">
        <svg width="54" height="54" viewBox="0 0 54 54" className="ml-[25px] shrink-0">
          <path d="M14 2h38v38a12 12 0 0 1-12 12H14A12 12 0 0 1 2 40V14A12 12 0 0 1 14 2z" fill="none" stroke="#7fb0f5" strokeWidth="3.5" />
          <path d="M16 26l13-12 11 12-13 12H16z" fill="#8ab8fa" />
        </svg>
        <div className="ml-[14px]">
          <div className="text-[21px] leading-[27px] font-light">网络错误</div>
          <div className="text-[18px] leading-[27px] font-light">点击此处查看详情</div>
        </div>
        <svg width="14" height="14" viewBox="0 0 14 14" className="absolute right-[11px] top-[13px]">
          <path d="M1 1l12 12M13 1L1 13" stroke="#fff" strokeWidth="3" />
        </svg>
      </div>

      {/* csdn watermark */}
      <div className="absolute left-[1667px] top-[1052px] text-[16px] leading-[20px] text-white/60 font-['Liberation_Sans',sans-serif] whitespace-nowrap">
        https://blog.csdn.net/qq_41358574
      </div>
    </div>
  );
}
